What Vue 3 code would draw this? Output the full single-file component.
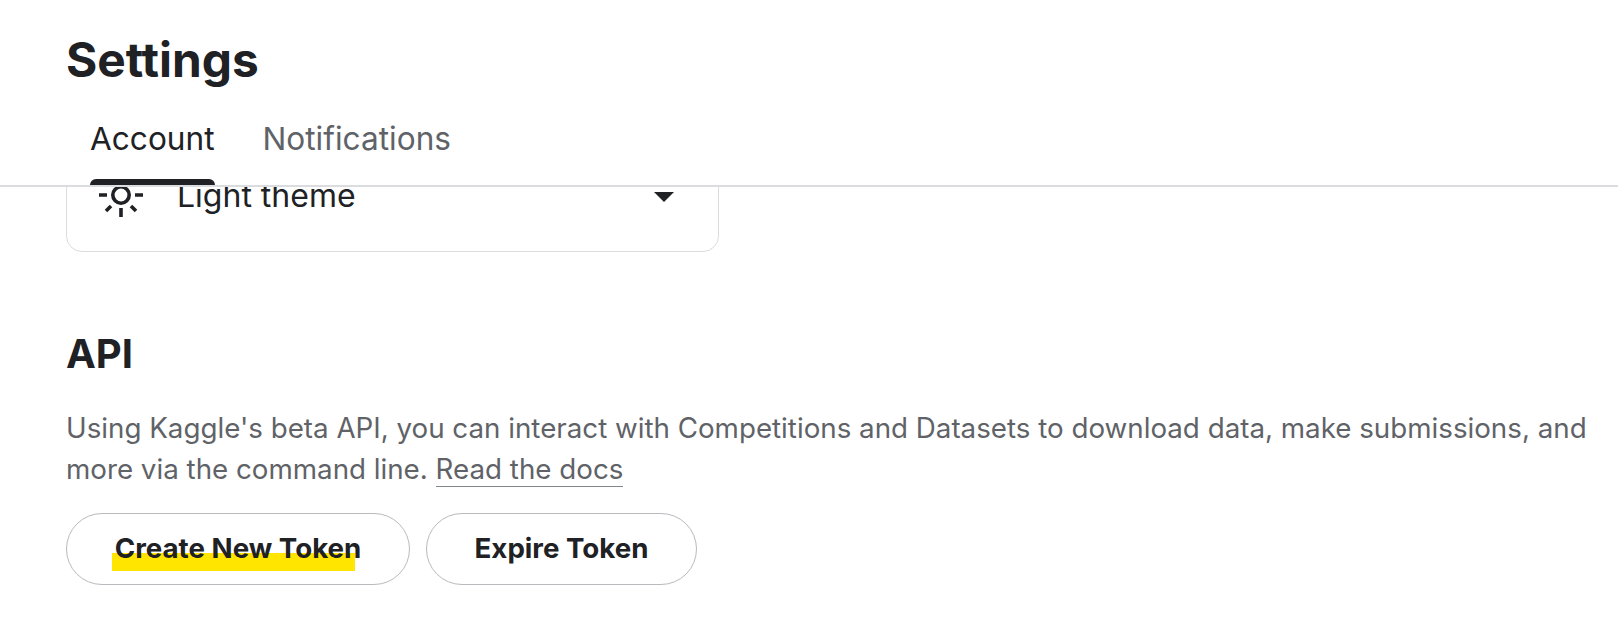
<script setup>
const tabs = [
  { label: 'Account', active: true },
  { label: 'Notifications', active: false },
]
</script>

<template>
  <div class="page">
    <header class="head">
      <h1 class="title">Settings</h1>
      <nav class="tabs">
        <div v-for="t in tabs" :key="t.label" class="tab" :class="{ active: t.active }">{{ t.label }}</div>
      </nav>
    </header>

    <main class="content">
      <div class="select">
        <svg class="sun" width="46" height="34" viewBox="0 0 46 34" fill="none" stroke="#202124" stroke-width="3.6">
          <circle cx="23" cy="12" r="8.2" />
          <path d="M1 12h8M37 12h8M23 25v9M13 23l-5 5M33 23l5 5" />
        </svg>
        <span class="select-text">Light theme</span>
        <svg class="caret" width="20" height="10" viewBox="0 0 20 10"><path d="M0 0h20L10 10z" fill="#202124" /></svg>
      </div>

      <h2 class="section">API</h2>
      <p class="desc">
        Using Kaggle's beta API, you can interact with Competitions and Datasets to download data, make submissions, and more via the command line.
        <a class="link">Read the docs</a>
      </p>
      <div class="actions">
        <button type="button" class="btn first">
          <span class="mark" aria-hidden="true"></span>
          <span class="btn-label">Create New Token</span>
        </button>
        <button type="button" class="btn second"><span class="btn-label">Expire Token</span></button>
      </div>
    </main>
  </div>
</template>

<style scoped>
.page { width: 1618px; height: 642px; overflow: hidden; background: #fff; font-family: Inter, "Liberation Sans", sans-serif; color: #202124; }
.head { position: relative; z-index: 2; height: 187px; box-sizing: border-box; padding: 30px 66px 0; background: #fff; border-bottom: 2px solid #dadce0; }
.title { margin: 0; font-size: 47.8px; line-height: 60px; font-weight: 700; }
.tabs { display: flex; gap: 48px; margin-top: 29px; padding-left: 24px; }
.tab { position: relative; font-size: 31.6px; line-height: 40px; color: #5f6368; height: 66px; }
.tab.active { color: #202124; }
.tab.active::after { content: ""; position: absolute; left: 0; right: 0; bottom: 0; height: 6px; background: #202124; border-radius: 6px 6px 0 0; }
.content { padding: 0 66px; }
.select { display: flex; align-items: center; width: 653px; height: 114px; margin-top: -49px; box-sizing: border-box; border: 1px solid #dadce0; border-radius: 16px; padding: 0 44px 0 31px; }
.sun { margin-top: 10px; }
.select-text { font-size: 32px; margin-left: 33px; flex: 1; }
.caret { flex: none; margin-top: 4px; }
.section { margin: 74px 0 0; font-size: 40px; line-height: 56px; font-weight: 700; }
.desc { margin: 26px 0 0; font-size: 27.74px; line-height: 41px; color: #5f6368; width: 1530px; }
.link { color: #5f6368; border-bottom: 1px solid #80868b; }
.actions { display: flex; gap: 16px; margin-top: 23px; }
.btn { position: relative; height: 72px; box-sizing: border-box; border: 1px solid #b8babe; border-radius: 36px; background: #fff; font: 700 27.7px Inter, "Liberation Sans", sans-serif; color: #202124; padding: 0 0 2px; }
.btn.first { width: 344px; }
.btn.second { width: 271px; }
.btn-label { position: relative; }
.mark { position: absolute; left: 45px; top: 39px; width: 243px; height: 17.5px; background: #ffe500; }
</style>
